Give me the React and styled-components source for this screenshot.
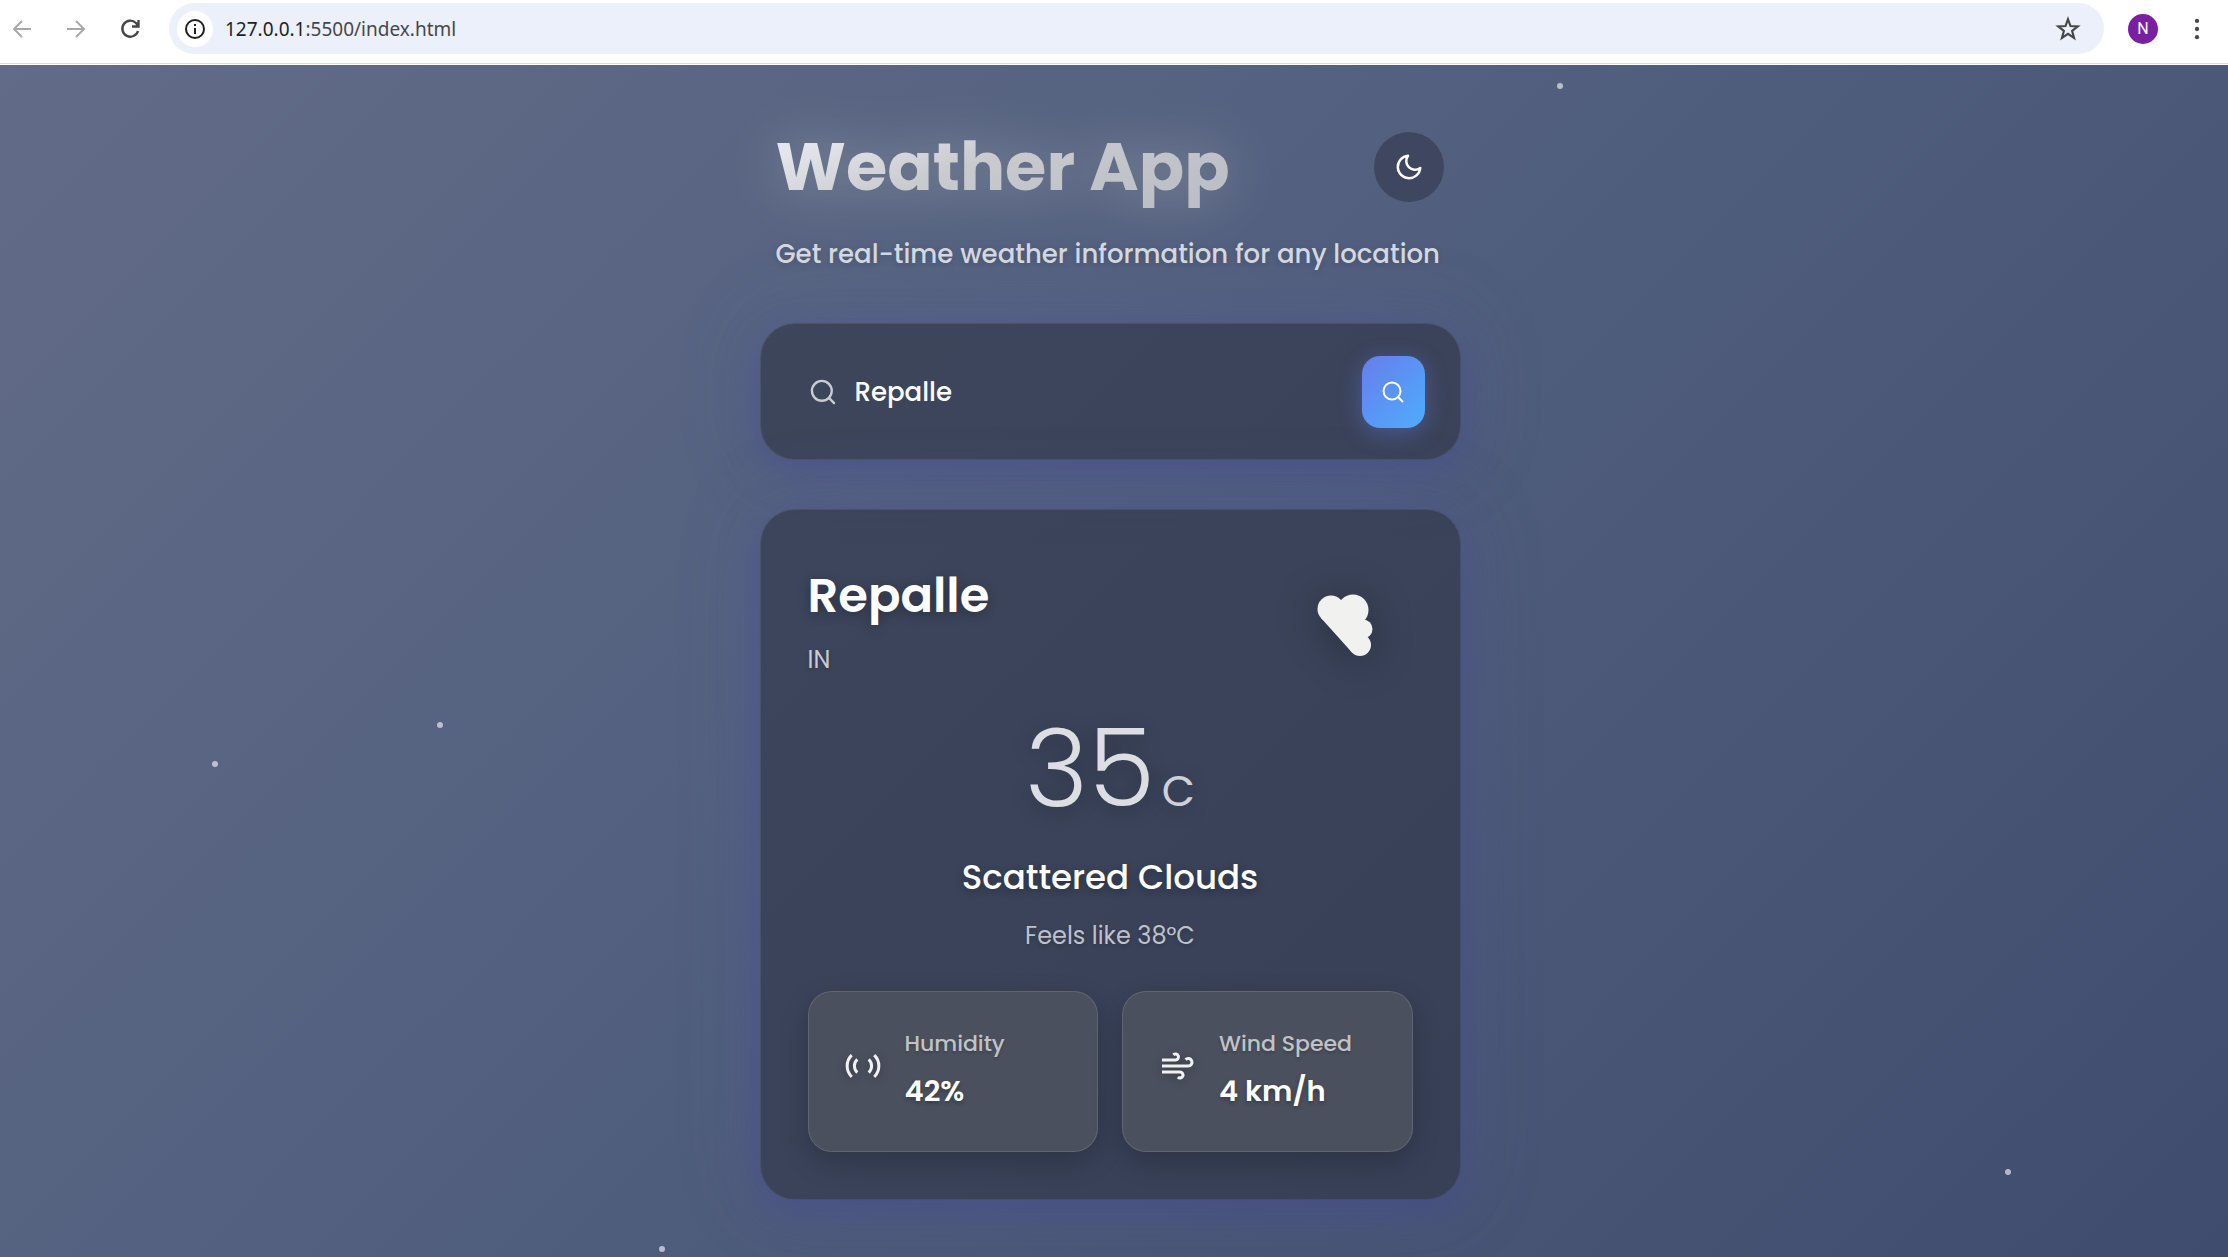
import React from "react";
import styled, { createGlobalStyle } from "styled-components";

const Global = createGlobalStyle`
  * { box-sizing: border-box; }
  body { margin: 0; font-family: Poppins, Inter, "Liberation Sans", sans-serif; color: #fff; background: #fff; }
  h1, h2, p, dl, dt, dd { margin: 0; }
  button { font: inherit; border: 0; padding: 0; color: inherit; cursor: pointer; }
`;

const Page = styled.div`
  min-height: 100vh;
  display: flex;
  flex-direction: column;
`;

const Toolbar = styled.header`
  display: flex;
  align-items: center;
  gap: 14px;
  height: 64px;
  margin-bottom: 1px;
  padding: 0 11px 6px 6px;
  background: #fff;
  border-bottom: 1px solid #dcdde0;
`;

const NavButton = styled.button`
  display: grid;
  place-items: center;
  width: 40px;
  height: 40px;
  background: transparent;
  color: ${(p) => (p.disabled ? "#a8a8a8" : "#474747")};
`;

const NavGroup = styled.nav`
  display: flex;
  gap: 14px;
  margin: 0 5px 0 -4px;
`;

const AddressBar = styled.form`
  flex: 1;
  display: flex;
  align-items: center;
  gap: 12px;
  height: 51px;
  padding: 0 16px 0 8px;
  border-radius: 26px;
  background: #ebf0fa;
`;

const InfoButton = styled.button`
  display: grid;
  place-items: center;
  width: 36px;
  height: 36px;
  border-radius: 50%;
  background: #fff;
  color: #1f1f1f;
`;

const Url = styled.a`
  flex: 1;
  font: 19px "Noto Sans", "Open Sans", sans-serif;
  color: #474747;
  text-decoration: none;
  span { color: #1f1f1f; }
`;

const Avatar = styled.button`
  width: 30px;
  height: 30px;
  margin: 0 5px 0 10px;
  border-radius: 50%;
  background: #7b1fa2;
  font: 16px Roboto, sans-serif;
  color: #fff;
`;

const Sky = styled.main`
  position: relative;
  flex: 1;
  display: flex;
  flex-direction: column;
  align-items: center;
  overflow: hidden;
  padding: 51px 28px 56px 20px;
  background: linear-gradient(135deg, #626c88 0%, #505e7d 50%, #404c6d 100%);
`;

const Star = styled.i`
  position: absolute;
  left: ${(p) => p.$x}%;
  top: ${(p) => p.$y}%;
  width: 6px;
  height: 6px;
  border-radius: 50%;
  background: rgba(255, 255, 255, 0.6);
`;

const Container = styled.div`
  width: 100%;
  max-width: 701px;
`;

const Header = styled.div`
  padding: 0 17px 0 16px;
`;

const TitleRow = styled.div`
  display: flex;
  align-items: center;
  justify-content: space-between;
  height: 102px;
`;

const Title = styled.h1`
  font-size: 67px;
  line-height: 102px;
  font-weight: 700;
  color: transparent;
  background: linear-gradient(160deg, #e4e6ec 15%, #c8cace 45%, #bcbfc6 85%);
  background-clip: text;
  filter: drop-shadow(0 0 28px rgba(255, 255, 235, 0.3));
`;

const ThemeButton = styled.button`
  display: grid;
  place-items: center;
  width: 70px;
  height: 70px;
  border-radius: 50%;
  background: #3f4760;
`;

const Subtitle = styled.p`
  font-size: 26px;
  font-weight: 500;
  line-height: 44px;
  margin: 14px 0 47px;
  color: #d3d7df;
  white-space: nowrap;
  text-shadow: 0 2px 6px rgba(0, 0, 0, 0.15);
`;

const Panel = styled.section`
  border: 1px solid rgba(255, 255, 255, 0.08);
  border-radius: 35px;
  background: rgba(45, 50, 67, 0.6);
  box-shadow: 0 10px 40px rgba(65, 65, 150, 0.45), 0 0 80px rgba(100, 110, 155, 0.25);
`;

const SearchPanel = styled(Panel)`
  padding: 32px 35px 31px 48px;
  margin-bottom: 49px;
`;

const SearchForm = styled.form`
  display: flex;
  align-items: center;
  gap: 18px;
  label { display: flex; color: #c9ccd3; }
`;

const SearchInput = styled.input`
  flex: 1;
  min-width: 0;
  border: 0;
  outline: 0;
  padding: 0;
  background: transparent;
  color: #fff;
  font: 500 26px Poppins, Inter, sans-serif;
`;

const SearchButton = styled.button`
  display: grid;
  place-items: center;
  width: 63px;
  height: 72px;
  border-radius: 18px;
  background: linear-gradient(135deg, #667eea, #4facfe);
  box-shadow: 0 5px 22px rgba(102, 126, 234, 0.4);
`;

const WeatherPanel = styled(Panel)`
  padding: 50px 47px 47px;
`;

const PlaceRow = styled.div`
  display: flex;
  justify-content: space-between;
  height: 153px;
`;

const City = styled.h2`
  font-size: 48px;
  line-height: 72px;
  font-weight: 600;
  text-shadow: 0 3px 12px rgba(0, 0, 0, 0.3);
`;

const Country = styled.p`
  font-size: 24px;
  line-height: 36px;
  margin-top: 10px;
  color: #c9cbd2;
  text-shadow: 0 2px 4px rgba(0, 0, 0, 0.2);
`;

const CloudArt = styled.svg`
  width: 140px;
  height: 140px;
  filter: drop-shadow(0 5px 20px rgba(0, 0, 0, 0.3));
`;

const Temperature = styled.p`
  display: flex;
  justify-content: center;
  align-items: baseline;
  gap: 7px;
  font-size: 108px;
  line-height: 112px;
  margin-bottom: 4px;
  font-weight: 300;
  color: #dcdee3;
  text-shadow: 0 4px 20px rgba(0, 0, 0, 0.25);
  span { font-size: 43px; font-weight: 400; color: #cfd1d8; }
`;

const Condition = styled.p`
  text-align: center;
  font-size: 34px;
  line-height: 52px;
  font-weight: 500;
  text-shadow: 0 3px 8px rgba(0, 0, 0, 0.3);
`;

const Feels = styled.p`
  text-align: center;
  margin: 14px 0 36px;
  font-size: 24px;
  line-height: 38px;
  color: #bfc2c9;
  text-shadow: 0 2px 4px rgba(0, 0, 0, 0.2);
`;

const Details = styled.dl`
  display: grid;
  grid-template-columns: 1fr 1fr;
  gap: 24px;
`;

const Detail = styled.div`
  display: grid;
  grid-template-columns: 36px 1fr;
  grid-template-rows: 34px 42px;
  row-gap: 8px;
  column-gap: 24px;
  height: 161px;
  padding: 34px 36px;
  border: 1px solid rgba(255, 255, 255, 0.12);
  border-radius: 24px;
  background: #4b505e;
  box-shadow: 0 10px 28px rgba(0, 0, 0, 0.2);
  svg { grid-row: 1 / 3; align-self: center; margin-bottom: 4px; color: #f1f1f2; filter: drop-shadow(0 2px 4px rgba(0, 0, 0, 0.3)); }
  dt { font-size: 22px; line-height: 36px; font-weight: 500; color: #c0c2c7; text-shadow: 0 2px 3px rgba(0, 0, 0, 0.2); white-space: nowrap; }
  dd { font-size: 29px; line-height: 46px; font-weight: 600; text-shadow: 0 2px 4px rgba(0, 0, 0, 0.3); white-space: nowrap; grid-column: 2; }
`;

const Icon = ({ size, sw = 2, children, ...rest }) => (
  <svg width={size} height={size} viewBox="0 0 24 24" fill="none" stroke="currentColor" strokeWidth={sw} aria-hidden="true" {...rest}>
    {children}
  </svg>
);

const Lens = ({ size }) => (
  <Icon size={size} sw={2} strokeLinecap="round">
    <circle cx="11" cy="11" r="8.5" />
    <path d="m17.3 17.3 4.2 4.2" />
  </Icon>
);

const stars = [[69.9, 1.5], [19.6, 55.1], [9.5, 58.4], [90, 92.6], [29.6, 99.1]];

export default function App() {
  return (
    <>
      <Global />
      <Page>
        <Toolbar>
          <NavGroup aria-label="Browser">
            <NavButton disabled aria-label="Back">
              <Icon size={24}><path d="M21 12H4M12 4l-8 8 8 8" /></Icon>
            </NavButton>
            <NavButton disabled aria-label="Forward">
              <Icon size={24}><path d="M3 12h17M12 4l8 8-8 8" /></Icon>
            </NavButton>
            <NavButton aria-label="Reload">
              <Icon size={24} sw={2.4}><path d="M20 14a8 8 0 1 1-2-8l2 2.600M20.500 3v6.500H14" /></Icon>
            </NavButton>
          </NavGroup>
          <AddressBar onSubmit={(e) => e.preventDefault()}>
            <InfoButton type="button" aria-label="Site information">
              <Icon size={24}><circle cx="12" cy="12" r="9" /><path d="M12 11v6M12 7v2" /></Icon>
            </InfoButton>
            <Url href="#"><span>127.0.0.1</span>:5500/index.html</Url>
            <NavButton type="button" aria-label="Bookmark">
              <Icon size={26}><path d="m12 3 2.300 6.300 6.700.3-5.200 4.200 1.800 6.400-5.600-3.700-5.600 3.700 1.800-6.400L3 9.600l6.700-.3z" /></Icon>
            </NavButton>
          </AddressBar>
          <Avatar aria-label="Profile N">N</Avatar>
          <NavButton aria-label="Menu">
            <Icon size={26} stroke="none" fill="currentColor">
              <circle cx="12" cy="4.500" r="2" /><circle cx="12" cy="12" r="2" /><circle cx="12" cy="19.500" r="2" />
            </Icon>
          </NavButton>
        </Toolbar>
        <Sky>
          {stars.map(([x, y]) => <Star key={x} $x={x} $y={y} />)}
          <Container>
            <Header>
              <TitleRow>
                <Title>Weather App</Title>
                <ThemeButton aria-label="Switch theme">
                  <Icon size={30} strokeLinejoin="round"><path d="M21 12.800A9 9 0 1 1 11.200 3a7 7 0 0 0 9.800 9.800z" /></Icon>
                </ThemeButton>
              </TitleRow>
              <Subtitle>Get real-time weather information for any location</Subtitle>
            </Header>
            <SearchPanel>
              <SearchForm onSubmit={(e) => e.preventDefault()}>
                <label htmlFor="city" aria-label="City"><Lens size={28} /></label>
                <SearchInput id="city" defaultValue="Repalle" />
                <SearchButton aria-label="Search"><Lens size={24} /></SearchButton>
              </SearchForm>
            </SearchPanel>
            <WeatherPanel>
              <PlaceRow>
                <div>
                  <City>Repalle</City>
                  <Country>IN</Country>
                </div>
                <CloudArt viewBox="0 1 140 140" aria-hidden="true">
                  <g fill="#f1f1f0">
                    <circle cx="58" cy="50" r="13.500" />
                    <circle cx="80" cy="51" r="15.500" />
                    <circle cx="90" cy="70" r="9.500" />
                    <circle cx="87" cy="86" r="11" />
                    <path d="M48 59 79 93.500l17-7-9-30-25-8z" />
                  </g>
                </CloudArt>
              </PlaceRow>
              <Temperature>35<span>C</span></Temperature>
              <Condition>Scattered Clouds</Condition>
              <Feels>Feels like 38°C</Feels>
              <Details>
                <Detail>
                  <Icon size={36}><path d="M4.500 4.800a10 10 0 0 0 0 14.400M8.200 7.600a6 6 0 0 0 0 8.800M15.800 7.600a6 6 0 0 1 0 8.800M19.500 4.800a10 10 0 0 1 0 14.400" /></Icon>
                  <dt>Humidity</dt>
                  <dd>42%</dd>
                </Detail>
                <Detail>
                  <Icon size={36}><path d="M9.590 4.590A2 2 0 1 1 11 8H2m10.590 11.410A2 2 0 1 0 14 16H2m15.730-8.270A2.500 2.500 0 1 1 19.500 12H2" /></Icon>
                  <dt>Wind Speed</dt>
                  <dd>4 km/h</dd>
                </Detail>
              </Details>
            </WeatherPanel>
          </Container>
        </Sky>
      </Page>
    </>
  );
}
